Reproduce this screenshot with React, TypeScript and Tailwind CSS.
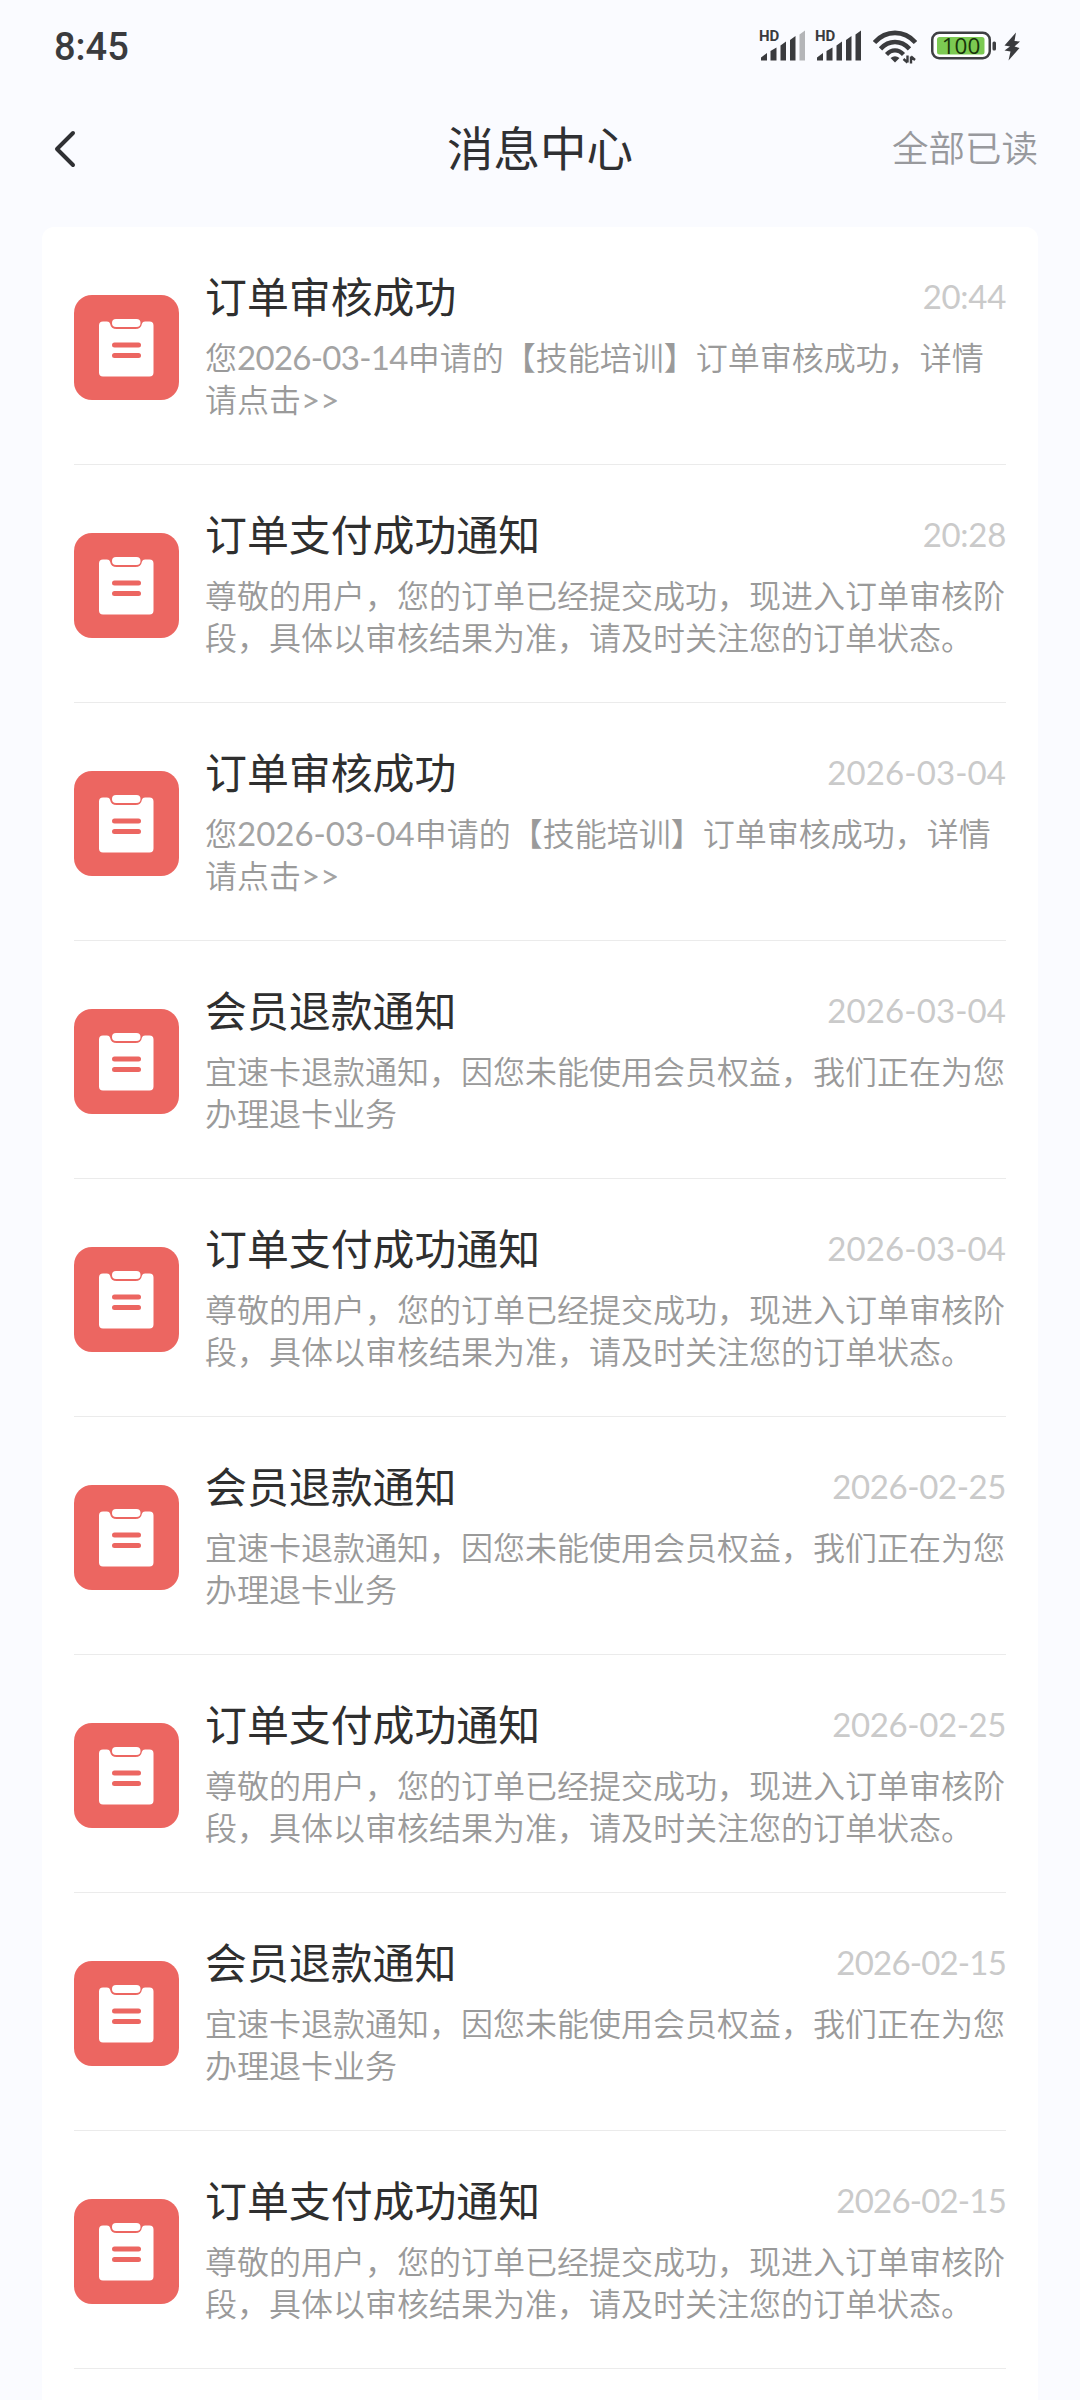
import React from "react";

type Message = {
  title: string;
  time: string;
  timeTracking?: string;
  lines: React.ReactNode[];
};

const CJK = "font-['Noto_Sans_CJK_SC',sans-serif]";
const LATIN = "font-['Lato','Noto_Sans_CJK_SC',sans-serif]";

const auditLines = (date: string, tracking: string) => [
  <>
    您<span className={`text-[33px] leading-none font-normal text-[#a3a3a3] ${LATIN} ${tracking}`}>{date}</span>
    申请的【技能培训】订单审核成功，详情
  </>,
  <>
    请点击<span className={`text-[33px] leading-none font-normal text-[#a3a3a3] ${LATIN}`}>&gt;&gt;</span>
  </>,
];

const PAID = [
  "尊敬的用户，您的订单已经提交成功，现进入订单审核阶",
  "段，具体以审核结果为准，请及时关注您的订单状态。",
];
const REFUND = ["宜速卡退款通知，因您未能使用会员权益，我们正在为您", "办理退卡业务"];

const messages: Message[] = [
  { title: "订单审核成功", time: "20:44", timeTracking: "tracking-[-0.3px]", lines: auditLines("2026-03-14", "tracking-[-0.7px]") },
  { title: "订单支付成功通知", time: "20:28", timeTracking: "tracking-[-0.3px]", lines: PAID },
  { title: "订单审核成功", time: "2026-03-04", lines: auditLines("2026-03-04", "tracking-normal") },
  { title: "会员退款通知", time: "2026-03-04", lines: REFUND },
  { title: "订单支付成功通知", time: "2026-03-04", lines: PAID },
  { title: "会员退款通知", time: "2026-02-25", timeTracking: "tracking-[-0.4px]", lines: REFUND },
  { title: "订单支付成功通知", time: "2026-02-25", timeTracking: "tracking-[-0.4px]", lines: PAID },
  { title: "会员退款通知", time: "2026-02-15", timeTracking: "tracking-[-0.8px]", lines: REFUND },
  { title: "订单支付成功通知", time: "2026-02-15", timeTracking: "tracking-[-0.8px]", lines: PAID },
];

function Signal({ weak }: { weak?: boolean }) {
  return (
    <div className="relative h-8 w-12">
      <span className="absolute -top-[3px] left-0 font-['Roboto',sans-serif] text-[15px] leading-[18px] font-bold text-[#3a3b3e]">
        HD
      </span>
      <svg width="48" height="32" viewBox="0 0 48 32" fill="#3a3b3e">
        <path d="M2 27.5l6-4.5v7.5H2z" />
        <path d="M11.5 21l6-3.5v13h-6z" />
        <path d="M21.5 15.5l5.5-4v19h-5.5z" />
        <path d="M31 10l5.5-4v24.5H31z" />
        <path d="M40.5 4.5l5.5-4v30h-5.5z" fill={weak ? "#b4b5b8" : "#3a3b3e"} />
      </svg>
    </div>
  );
}

function Wifi() {
  return (
    <svg width="44" height="36" viewBox="0 0 44 36" fill="none" stroke="#3a3b3e" strokeWidth="4.6">
      <path d="M1.5 12.5C13 -.3 31 -.3 42.500 12.500" />
      <path d="M7.500 18.800c8.500-9 20.500-9 29 0" />
      <path d="M13.500 24.500c5-5.500 12-5.500 17 0" strokeWidth="4.2" />
      <path d="M17.500 28q4.500-3.500 9 0l-4.500 4.500z" fill="#3a3b3e" stroke="none" />
      <path d="M34.500 25.500v7M34.500 32.500l-4-3.500M38 33.500v-7M38 26.500l4 3.500" strokeWidth="2.400" />
    </svg>
  );
}

function Battery() {
  return (
    <svg width="66" height="30" viewBox="0 0 66 30">
      <rect x="1.250" y="1.750" width="57.500" height="25.500" rx="7" fill="#fff" stroke="#3f4043" strokeWidth="2.500" />
      <rect x="6" y="6" width="47.500" height="17.500" rx="2.500" fill="#7cca52" />
      <rect x="61.500" y="10.500" width="3.500" height="9" rx="1.500" fill="#3f4043" />
      <text
        x="30"
        y="22.500"
        textAnchor="middle"
        fontFamily="Open Sans, sans-serif"
        fontSize="22.500"
        fill="#17340a"
      >
        100
      </text>
    </svg>
  );
}

function Bolt() {
  return (
    <svg width="18" height="30" viewBox="0 0 18 30" fill="#3a3b3e">
      <path d="M12 .5L.5 13.500l5.500 1L.500 18.500l6 1L4.500 28.500 15.500 16l-5-1.500 5.500-5-5.500-.5z" />
    </svg>
  );
}

function Clipboard() {
  return (
    <div className="mt-7 flex h-[105px] w-[105px] shrink-0 items-center justify-center rounded-[18px] bg-[#ec6661]">
      <svg width="105" height="105" viewBox="0 0 105 105">
        <path
          d="M29 26.500h4q2.500 0 3 2 1 5.500 6.500 5.500h19q5.500 0 6.500-5.500 .5-2 3-2h4.500q4 0 4 4v47q0 4-4 4H29q-4 0-4-4v-47q0-4 4-4z"
          fill="#fff"
        />
        <rect x="38" y="24" width="28.500" height="8" rx="4" fill="#fff" />
        <rect x="38" y="47.500" width="29" height="5" rx="2.500" fill="#ec6661" />
        <rect x="38" y="58" width="29" height="5" rx="2.500" fill="#ec6661" />
      </svg>
    </div>
  );
}

function Row({ message }: { message: Message }) {
  return (
    <li className="flex h-[238px] border-b border-[#ebebeb] pt-[38px]">
      <div className="pt-0.5">
        <Clipboard />
      </div>
      <div className="ml-[26px] min-w-0 flex-1">
        <div className="flex h-[60px] justify-between whitespace-nowrap">
          <h2 className="text-[41.900px] leading-[60px] font-normal text-[#2f2f2f]">{message.title}</h2>
          <time
            className={`pt-px text-[33px] leading-[60px] text-[#cacaca] ${LATIN} ${message.timeTracking ?? "tracking-[0.1px]"}`}
          >
            {message.time}
          </time>
        </div>
        <div className="mt-[10px] text-[32px] leading-[42px] font-[350] whitespace-nowrap text-[#9a9a9a]">
          {message.lines.map((line, i) => (
            <p key={i} className="h-[42px]">
              {line}
            </p>
          ))}
        </div>
      </div>
    </li>
  );
}

export default function App() {
  return (
    <div className={`flex h-[2400px] w-[1080px] flex-col overflow-hidden bg-[#fafbff] ${CJK}`}>
      <div className="flex h-[92px] shrink-0 items-center justify-between pr-[58px] pl-[54px]">
        <span className="pt-0.5 font-['Roboto',sans-serif] text-[38px] font-medium text-[#3a3b3e]">8:45</span>
        <div className="flex items-center">
          <Signal weak />
          <div className="ml-2">
            <Signal />
          </div>
          <div className="ml-[10px] pt-1">
            <Wifi />
          </div>
          <div className="ml-[14px]">
            <Battery />
          </div>
          <div className="ml-[7px] pt-px">
            <Bolt />
          </div>
        </div>
      </div>
      <header className="grid h-[135px] shrink-0 grid-cols-3 items-center pr-[42px] pb-[23px] pl-[54px]">
        <svg className="mt-0.5" width="22" height="38" viewBox="0 0 22 38" fill="none" stroke="#2f3033" strokeWidth="4" strokeLinecap="round" strokeLinejoin="round">
          <path d="M19 3L3 19l16 16" />
        </svg>
        <h1 className="-ml-3 pb-1 text-center text-[46.500px] leading-[64px] font-normal text-[#2f3033]">消息中心</h1>
        <span className="pb-0.5 text-right text-[36.500px] leading-[64px] font-[350] text-[#98999d]">全部已读</span>
      </header>
      <ul className="mx-[42px] flex-1 rounded-t-xl bg-white px-8">
        {messages.map((m, i) => (
          <Row key={i} message={m} />
        ))}
      </ul>
    </div>
  );
}
